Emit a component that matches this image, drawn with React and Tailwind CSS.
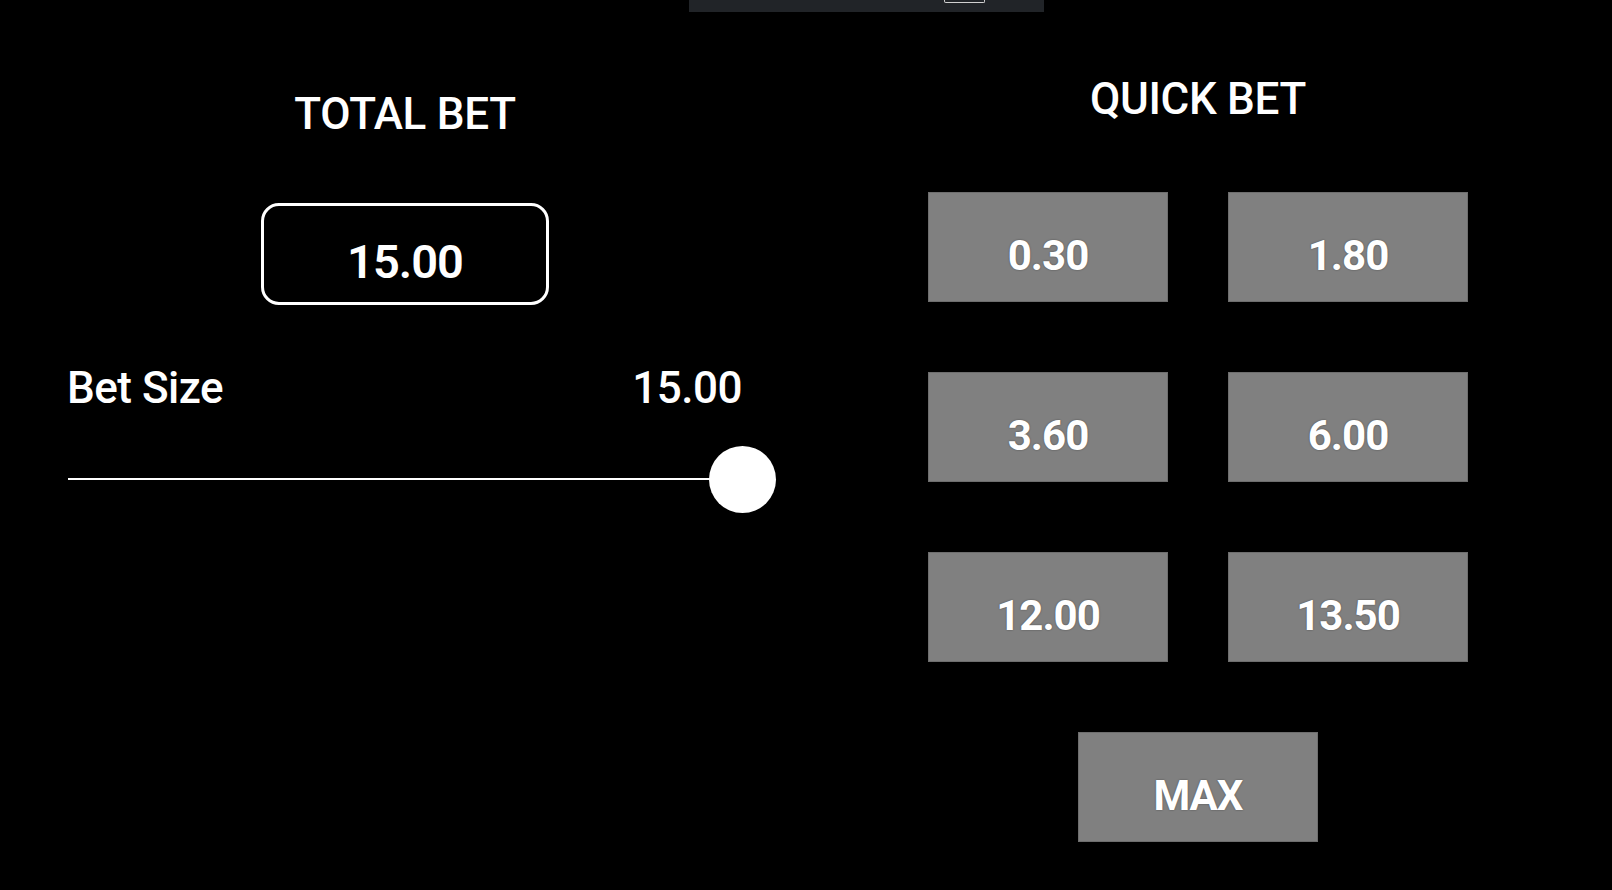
export default function App() {
  const quick = ["0.30", "1.80", "3.60", "6.00", "12.00", "13.50"];
  const btn =
    "w-[240px] h-[110px] bg-[#808080] border border-[#6e6e6e] flex justify-center pt-[42px] text-[42px] leading-none font-bold text-white tracking-[-1px] [text-shadow:0_0_2px_rgba(0,0,0,0.45)]";
  return (
    <div
      className="w-[1612px] h-[890px] bg-black text-white overflow-hidden flex flex-col"
      style={{ fontFamily: "Roboto, 'Liberation Sans', sans-serif" }}
    >
      <div className="ml-[689px] w-[355px] h-[12px] bg-[#212428] flex pl-[255px]">
        <div className="w-[41px] h-[3px] border-x border-b border-[#d0d0d0] rounded-b-[2px]" />
      </div>
      <div className="flex flex-1">
        {/* Left */}
        <div className="w-[810px] flex flex-col">
          <div className="mt-[80px] text-[44px] leading-none font-medium text-center tracking-[-0.3px]">TOTAL BET</div>
          <div className="mt-[67px] mx-auto w-[288px] h-[102px] border-[3px] border-white rounded-[18px] flex justify-center pt-[32px] text-[47px] leading-none font-semibold tracking-[-1px]">
            15.00
          </div>
          <div className="mt-[61px] flex justify-between pl-[67px] pr-[68px] text-[44px] leading-none font-medium tracking-[-0.5px]">
            <span>Bet Size</span>
            <span>15.00</span>
          </div>
          <div className="mt-[36px] ml-[68px] w-[708px] h-[67px] relative">
            <div className="absolute left-0 right-[30px] top-[32px] h-[2px] bg-white" />
            <div className="absolute right-0 top-0 w-[67px] h-[67px] rounded-full bg-white" />
          </div>
        </div>
        {/* Right */}
        <div className="ml-[118px] w-[540px] flex flex-col">
          <div className="mt-[65px] text-[44px] leading-none font-medium text-center tracking-[-0.3px]">QUICK BET</div>
          <div className="mt-[71px] grid grid-cols-2 gap-x-[60px] gap-y-[70px]">
            {quick.map((q) => (
              <div key={q} className={btn}>
                {q}
              </div>
            ))}
          </div>
          <div className="mt-[70px] mx-auto">
            <div className={btn}>MAX</div>
          </div>
        </div>
      </div>
    </div>
  );
}
